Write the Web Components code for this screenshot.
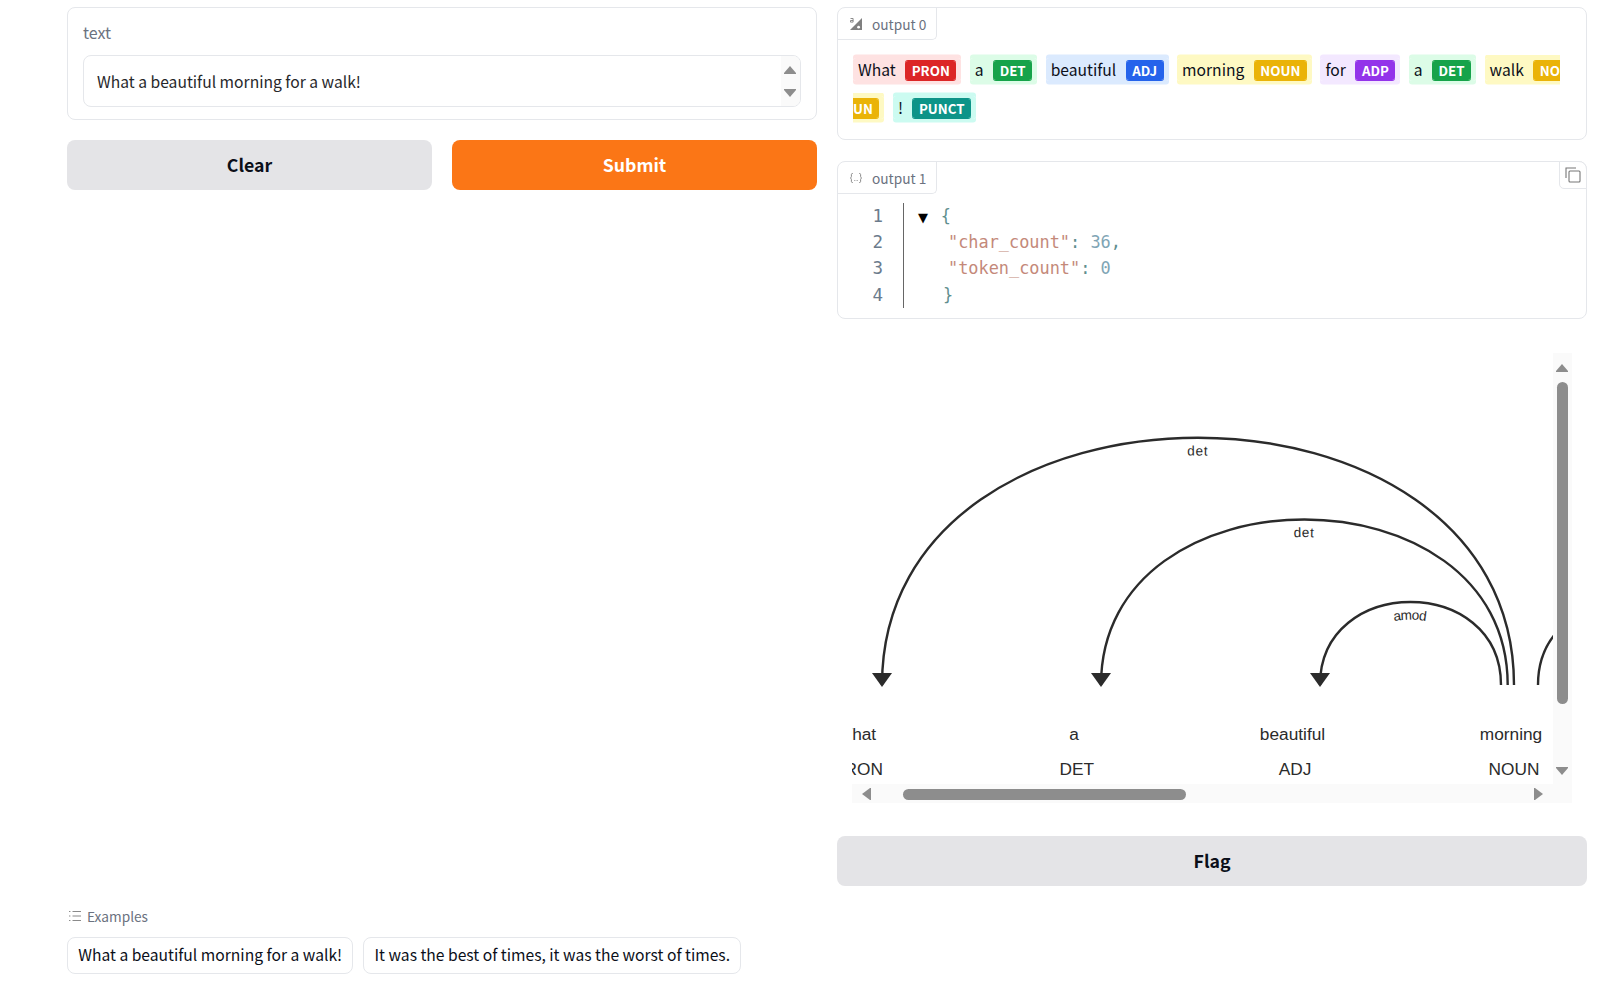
<!DOCTYPE html>
<html>
<head>
<meta charset="utf-8">
<title>Demo</title>
<style>
	html, body { margin: 0; background: #fff; }
	body { font-family: "Noto Sans CJK SC", "Noto Sans", sans-serif; color: #27272a; }
</style>
</head>
<body>
<app-shell>
	<text-input-card slot="left" label="text" value="What a beautiful morning for a walk!"></text-input-card>
	<div slot="actions" style="display:contents">
		<action-button>Clear</action-button>
		<action-button variant="primary">Submit</action-button>
	</div>
	<highlight-output slot="right"></highlight-output>
	<json-output slot="right"></json-output>
	<dep-diagram slot="right"></dep-diagram>
	<action-button slot="right">Flag</action-button>
	<examples-list slot="examples"></examples-list>
</app-shell>

<script>
// Треугольник для стрелок скроллбара, dir: up/down/left/right.
function arrowSvg(dir) {
	const points = {
		up: '0,7 6,0 12,7 12,8 0,8',
		down: '0,0 12,0 12,1 6,8 0,1',
		left: '9,0 9,12 8,12 0,6 8,0',
		right: '0,0 1,0 9,6 1,12 0,12',
	}[dir];
	const size = dir === 'up' || dir === 'down' ? 'width="12" height="8" viewBox="0 0 12 8"' : 'width="9" height="12" viewBox="0 0 9 12"';
	return `<svg ${size} style="display:block"><polygon points="${points}" fill="#8d8d8d"/></svg>`;
}

class AppShell extends HTMLElement {
	constructor() {
		super();
		this.attachShadow({ mode: 'open' });
		this.shadowRoot.innerHTML = `
			<style>
				:host { display: block; padding: 7px 29px 0 67px; }
				.columns { display: grid; grid-template-columns: 750px 750px; column-gap: 20px; }
				.col { display: flex; flex-direction: column; }
				.actions { display: grid; grid-template-columns: 1fr 1fr; gap: 20px; margin-top: 20px; }
				.right { gap: 21px; }
				.examples { margin-top: 19px; }
			</style>
			<div class="columns">
				<div class="col">
					<slot name="left"></slot>
					<div class="actions"><slot name="actions"></slot></div>
				</div>
				<div class="col right"><slot name="right"></slot></div>
			</div>
			<div class="examples"><slot name="examples"></slot></div>
		`;
	}
}

class ActionButton extends HTMLElement {
	constructor() {
		super();
		this.attachShadow({ mode: 'open' });
		this.shadowRoot.innerHTML = `
			<style>
				:host { display: flex; align-items: center; justify-content: center; box-sizing: border-box; height: 50px; padding-bottom: 2px; border-radius: 8px;
					background: #e4e4e7; color: #0b0f19; font-size: 17.7px; font-weight: 600; line-height: 24px; }
				:host([variant="primary"]) { background: #fb7616; color: #fff; }
			</style>
			<slot></slot>
		`;
	}
}

class TextInputCard extends HTMLElement {
	constructor() {
		super();
		this.attachShadow({ mode: 'open' });
		this.shadowRoot.innerHTML = `
			<style>
				:host { display: block; box-sizing: border-box; height: 113px; border: 1px solid #e5e7eb; border-radius: 8px; padding: 13px 15px; }
				.label { font-size: 16px; line-height: 22px; color: #6b7280; }
				.field { display: flex; box-sizing: border-box; height: 52px; margin-top: 12px; border: 1px solid #e5e7eb; border-radius: 8px; overflow: hidden; }
				.value { flex: 1; padding: 0 13px; font-size: 15.65px; line-height: 51px; color: #27272a; }
				.bar { box-sizing: border-box; width: 19px; background: #fafafa; display: flex; flex-direction: column; align-items: center; justify-content: space-between; padding: 10px 1px 9px 0; }
			</style>
			<div class="label"></div>
			<div class="field">
				<div class="value"></div>
				<div class="bar">${arrowSvg('up')}${arrowSvg('down')}</div>
			</div>
		`;
		this.shadowRoot.querySelector('.label').textContent = this.getAttribute('label') ?? '';
		this.shadowRoot.querySelector('.value').textContent = this.getAttribute('value') ?? '';
	}
}

// Вкладка-подпись в левом верхнем углу блока вывода.
class BlockTab extends HTMLElement {
	constructor() {
		super();
		this.attachShadow({ mode: 'open' });
		this.shadowRoot.innerHTML = `
			<style>
				:host { display: inline-flex; align-items: center; box-sizing: border-box; height: 32px; width: 99px; padding-left: 11px; gap: 9px;
					border-right: 1px solid #e5e7eb; border-bottom: 1px solid #e5e7eb; border-bottom-right-radius: 5px;
					font-size: 13.7px; color: #6b7280; }
				::slotted(svg) { flex: none; }
			</style>
			<slot></slot>
		`;
	}
}

class HighlightOutput extends HTMLElement {
	constructor() {
		super();
		this.attachShadow({ mode: 'open' });
		const tokens = [
			['What', 'PRON', '#fee2e2', '#dc2626'],
			['a', 'DET', '#dcfce7', '#16a34a'],
			['beautiful', 'ADJ', '#dbeafe', '#2563eb'],
			['morning', 'NOUN', '#fef9c3', '#eab308'],
			['for', 'ADP', '#f3e8ff', '#9333ea'],
			['a', 'DET', '#dcfce7', '#16a34a'],
			['walk', 'NOUN', '#fef9c3', '#eab308'],
			['!', 'PUNCT', '#ccfbf1', '#0d9488'],
		];
		const spans = tokens.map(([word, tag, light, dark]) =>
			`<span class="token" style="background:${light};box-shadow:0 3.5px 0 ${light},0 -3.5px 0 ${light}"><span class="word">${word}</span><span class="tag" style="background:${dark};box-shadow:0 1px 0 ${dark},0 -1px 0 ${dark}">${tag}</span></span>`).join('');
		this.shadowRoot.innerHTML = `
			<style>
				:host { display: block; box-sizing: border-box; height: 133px; border: 1px solid #e5e7eb; border-radius: 8px; overflow: hidden; }
				.text { margin: 10.5px 25px 0 15px; font-size: 15.65px; line-height: 37.6px; color: #0b0f19; word-break: break-all; }
				.token { padding: 0 5px; margin-right: 8.5px; border-radius: 3px; }
				.tag { margin-left: 9.5px; padding: 0 6.5px; border-radius: 3px; color: #fff; font-size: 13.3px; font-weight: 700; }
			</style>
			<block-tab>
				<svg width="14" height="14" viewBox="0 0 14 14">
					<polygon points="13,1 13,13 1,13" fill="#808080"/>
					<circle cx="9.6" cy="10.2" r="1.4" fill="#fff"/>
					<path d="M1.5 1.5h2.6v3.6h-2.6v-1.6h2.6" fill="none" stroke="#808080" stroke-width=".9"/>
				</svg>
				output 0
			</block-tab>
			<div class="text">${spans}</div>
		`;
	}
}

class JsonOutput extends HTMLElement {
	constructor() {
		super();
		this.attachShadow({ mode: 'open' });
		const lines = [
			'<span class="tri">▼</span><span class="p">{</span>',
			'<span class="key">"char_count"</span><span class="p">:</span> <span class="num">36</span><span class="p">,</span>',
			'<span class="key">"token_count"</span><span class="p">:</span> <span class="num">0</span>',
			'<span class="close p">}</span>',
		];
		this.shadowRoot.innerHTML = `
			<style>
				:host { display: block; position: relative; box-sizing: border-box; height: 158px; border: 1px solid #e5e7eb; border-radius: 8px; }
				.code { display: grid; grid-template-columns: 66px 1fr; margin-top: 9px; font-family: "DejaVu Sans Mono", "Liberation Mono", monospace; font-size: 16.9px; line-height: 26.2px; }
				.nums { text-align: right; padding-right: 20px; font-size: 17.5px; color: #6b7b8c; border-right: 1px solid #666; }
				.lines { padding-left: 44px; }
				.line { white-space: pre; height: 26.2px; }
				.tri { display: inline-block; width: 24px; margin-left: -37px; margin-right: 5.8px; color: #000; font-size: 13px; text-align: center; font-family: "DejaVu Sans", sans-serif; }
				.close { margin-left: -5px; }
				.key { color: #c4897a; }
				.num { color: #7fa5b5; }
				.p { color: #5f8f8f; }
				.copy { position: absolute; top: -1px; right: -1px; box-sizing: border-box; width: 28px; height: 28px; display: flex; align-items: center; justify-content: center;
					border: 1px solid #e5e7eb; border-top-right-radius: 8px; border-bottom-left-radius: 5px; background: #fff; }
			</style>
			<block-tab>
				<svg width="14" height="14" viewBox="0 0 14 14" fill="none" stroke="#8a8a8a" stroke-width="1">
					<path d="M4 2.5h-.6c-.9 0-1 .5-1 1.4v1.6c0 .8-.4 1.3-1 1.5.6.2 1 .7 1 1.5v1.6c0 .9.1 1.4 1 1.4H4"/>
					<path d="M10 2.5h.6c.9 0 1 .5 1 1.4v1.6c0 .8.4 1.3 1 1.5-.6.2-1 .7-1 1.5v1.6c0 .9-.1 1.4-1 1.4H10"/>
					<path d="M5.3 9.5h.7M6.7 9.5h.7M8.1 9.5h.7" stroke-width=".9"/>
				</svg>
				output 1
			</block-tab>
			<div class="copy">
				<svg width="16" height="16" viewBox="0 0 16 16" fill="none" stroke="#777" stroke-width="1.1">
					<rect x="4" y="4" width="11" height="11" rx="1"/>
					<path d="M1 11V1h10"/>
				</svg>
			</div>
			<div class="code">
				<div class="nums">1<br>2<br>3<br>4</div>
				<div class="lines">${lines.map((l) => `<div class="line">${l}</div>`).join('')}</div>
			</div>
		`;
	}
}

// Дерево зависимостей: вид обрезан областью прокрутки, как в исходном блоке.
class DepDiagram extends HTMLElement {
	constructor() {
		super();
		this.attachShadow({ mode: 'open' });
		const baseY = 332;
		const arcs = [
			{ id: 'a1', from: 30, to: 662, h: 329.7, label: 'det' },
			{ id: 'a2', from: 249, to: 655.7, h: 220.7, label: 'det' },
			{ id: 'a3', from: 468, to: 649, h: 110.7, label: 'amod' },
			{ id: 'a4', from: 686, to: 870, h: 110.7 },
		];
		const arcSvg = arcs.map((a) => `
			<path id="${a.id}" d="M${a.from},${baseY} C${a.from},${baseY - a.h} ${a.to},${baseY - a.h} ${a.to},${baseY}" fill="none" stroke="#2b2b2b" stroke-width="2.4"/>
			${a.label ? `<text class="arc-label"><textPath href="#${a.id}" startOffset="50%" text-anchor="middle"><tspan dy="1.3em">${a.label}</tspan></textPath></text>
			<polygon points="${a.from - 10},${baseY - 12} ${a.from + 10},${baseY - 12} ${a.from},${baseY + 2}" fill="#2b2b2b"/>` : ''}
		`).join('');
		const words = [
			[4, 6, 'What', 'PRON'],
			[222, 224.7, 'a', 'DET'],
			[440.5, 443, 'beautiful', 'ADJ'],
			[659, 662, 'morning', 'NOUN'],
		];
		const wordSvg = words.map(([x1, x2, w, t]) => `
			<text class="word" x="${x1}" y="387" text-anchor="middle">${w}</text>
			<text class="word" x="${x2}" y="422" text-anchor="middle">${t}</text>
		`).join('');
		this.shadowRoot.innerHTML = `
			<style>
				:host { display: block; margin: 13px 15px 12px; }
				.wrap { display: grid; grid-template-columns: 701px 19px; grid-template-rows: 431px 19px; }
				svg.view { display: block; }
				.word { font: 17.3px "Liberation Sans", Arial, sans-serif; fill: #2b2b2b; }
				.arc-label { font: 13.6px "Liberation Sans", Arial, sans-serif; fill: #2b2b2b; letter-spacing: 1px; }
				.vbar { background: #fafafa; display: flex; flex-direction: column; align-items: center; padding: 11px 1px 0 0; }
				.vthumb { width: 11px; height: 322px; margin-top: 10px; border-radius: 6px; background: #8d8d8d; }
				.vdown { margin-top: auto; margin-bottom: 9px; }
				.hbar { grid-column: 1 / 3; background: #fafafa; display: flex; align-items: center; padding: 1px 0 0 10px; }
				.hthumb { height: 11px; width: 283px; margin-left: 32px; border-radius: 6px; background: #8d8d8d; }
				.hright { margin-left: 348px; }
			</style>
			<div class="wrap">
				<svg class="view" width="701" height="431" viewBox="0 0 701 431">${arcSvg}${wordSvg}</svg>
				<div class="vbar">${arrowSvg('up')}<div class="vthumb"></div><div class="vdown">${arrowSvg('down')}</div></div>
				<div class="hbar">${arrowSvg('left')}<div class="hthumb"></div><div class="hright">${arrowSvg('right')}</div></div>
			</div>
		`;
	}
}

class ExamplesList extends HTMLElement {
	constructor() {
		super();
		this.attachShadow({ mode: 'open' });
		this.shadowRoot.innerHTML = `
			<style>
				:host { display: block; }
				.head { display: flex; align-items: center; gap: 6px; padding-left: 2px; font-size: 13.7px; line-height: 22px; color: #6b7280; }
				.items { display: flex; gap: 10px; margin-top: 10px; }
				.item { box-sizing: border-box; height: 37px; padding: 0 10.2px; border: 1px solid #e5e7eb; border-radius: 8px; font-size: 15.65px; line-height: 34px; color: #0b0f19; }
			</style>
			<div class="head">
				<svg width="12" height="10" viewBox="0 0 12 10" fill="none" stroke="#8a8a8a" stroke-width="1">
					<path d="M3.5 .5H12M3.5 5H12M3.5 9.5H12"/>
					<path d="M0 .5h1.4M0 5h1.4M0 9.5h1.4"/>
				</svg>
				Examples
			</div>
			<div class="items">
				<div class="item">What a beautiful morning for a walk!</div>
				<div class="item">It was the best of times, it was the worst of times.</div>
			</div>
		`;
	}
}

customElements.define('block-tab', BlockTab);
customElements.define('action-button', ActionButton);
customElements.define('text-input-card', TextInputCard);
customElements.define('highlight-output', HighlightOutput);
customElements.define('json-output', JsonOutput);
customElements.define('dep-diagram', DepDiagram);
customElements.define('examples-list', ExamplesList);
customElements.define('app-shell', AppShell);
</script>
</body>
</html>
